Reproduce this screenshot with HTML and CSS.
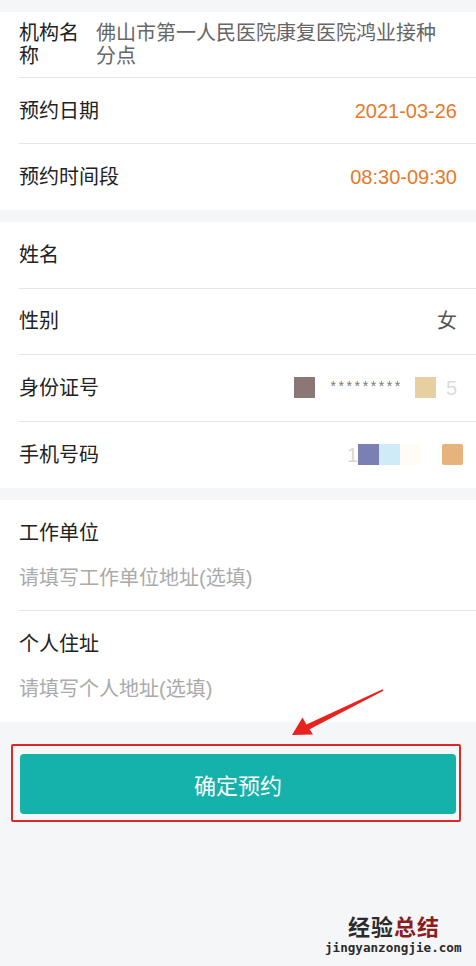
FILE: index.html
```html
<!DOCTYPE html>
<html lang="zh-CN">
<head>
<meta charset="utf-8">
<title>确定预约</title>
<link rel="stylesheet" href="styles.css">
</head>
<body>
<div class="page">
  <section class="card">
    <div class="row row-org">
      <div class="label label-org">机构名称</div>
      <div class="org">佛山市第一人民医院康复医院鸿业接种分点</div>
    </div>
    <div class="row">
      <div class="label">预约日期</div>
      <div class="value orange">2021-03-26</div>
    </div>
    <div class="row">
      <div class="label">预约时间段</div>
      <div class="value orange">08:30-09:30</div>
    </div>
  </section>

  <section class="card">
    <div class="row row-b">
      <div class="label">姓名</div>
      <div class="value faint">&nbsp;</div>
    </div>
    <div class="row row-b">
      <div class="label">性别</div>
      <div class="value gray">女</div>
    </div>
    <div class="row row-b">
      <div class="label">身份证号</div>
      <div class="mask">
        <span class="blk blk-brown"></span>
        <span class="stars">*********</span>
        <span class="blk blk-sand"></span>
        <span class="ghost">5</span>
      </div>
    </div>
    <div class="row row-b">
      <div class="label">手机号码</div>
      <div class="mask mask-phone">
        <span class="ghost">1</span>
        <span class="blk blk-blue"></span>
        <span class="blk blk-sky"></span>
        <span class="blk blk-cream"></span>
        <span class="blk blk-empty"></span>
        <span class="blk blk-peach"></span>
      </div>
    </div>
  </section>

  <section class="card">
    <div class="field">
      <div class="label">工作单位</div>
      <input class="input" type="text" placeholder="请填写工作单位地址(选填)">
    </div>
    <div class="field">
      <div class="label">个人住址</div>
      <input class="input" type="text" placeholder="请填写个人地址(选填)">
    </div>
  </section>

  <div class="btn-wrap">
    <button class="btn" type="button">确定预约</button>
    <div class="annot-box"></div>
  </div>

  <svg class="arrow" width="100" height="54" viewBox="288 686 100 54" xmlns="http://www.w3.org/2000/svg">
    <polygon fill="#e8231f" points="292,735 313,734.5 309.6,729.2 383.4,690.7 382.6,689.3 306.4,724.4 302.5,717.5"/>
  </svg>

  <div class="watermark">
    <div class="wm-cn"><span class="wm-dark">经验</span><span class="wm-red">总结</span></div>
    <div class="wm-en">jingyanzongjie.com</div>
  </div>
</div>
</body>
</html>
```

FILE: styles.css
```css
* {
  box-sizing: border-box;
}

html, body {
  margin: 0;
  padding: 0;
  background: #f4f6f7;
}

body {
  font-family: "Liberation Sans", "Noto Sans CJK SC", sans-serif;
  font-size: 20px;
  color: #222;
}

.page {
  position: relative;
  width: 476px;
  min-height: 966px;
  padding-top: 12px;
}

.card {
  background: #fff;
  margin-bottom: 12px;
}

.row {
  display: flex;
  align-items: center;
  justify-content: space-between;
  height: 66px;
  margin-left: 19px;
  padding-right: 19px;
  border-bottom: 1px solid #e6e6e6;
}

.row-b {
  height: 66.5px;
}

.row:last-child {
  border-bottom: none;
}

.label {
  color: #222;
  line-height: 24px;
  white-space: nowrap;
}

.row-org {
  justify-content: flex-start;
  gap: 15px;
}

.label-org {
  flex: 0 0 62px;
  white-space: normal;
  line-height: 23px;
}

.org {
  flex: 1;
  color: #666;
  line-height: 23px;
  padding-right: 14px;
}

.value {
  line-height: 24px;
}

.orange {
  color: #e8792b;
}

.gray {
  color: #555;
}

.faint {
  color: #f4f4f4;
}

.mask {
  display: flex;
  align-items: center;
}

.blk {
  display: inline-block;
  width: 21px;
  height: 21px;
}

.blk-brown {
  background: #8b7776;
  margin-right: 15px;
}

.stars {
  font-size: 14px;
  line-height: 14px;
  color: #7a7a7a;
  letter-spacing: 2.6px;
  margin-right: 12px;
  margin-top: -4px;
}

.blk-sand {
  background: #e6cfa0;
  margin-right: 10px;
}

.ghost {
  color: #dcdcdc;
  font-size: 20px;
  line-height: 24px;
}

.mask-phone .ghost {
  color: #d6d6d6;
}

.blk-blue {
  background: #7a7fb4;
}

.blk-sky {
  background: #cfeaf9;
}

.blk-cream {
  background: #fffcf3;
}

.blk-empty {
  background: #fff;
}

.blk-peach {
  background: #e6b37d;
  border-radius: 2px;
  margin-right: -6px;
}

.field {
  margin-left: 19px;
  padding: 21px 19px 20px 0;
  border-bottom: 1px solid #e6e6e6;
  display: flex;
  flex-direction: column;
  gap: 21px;
}

.field:last-child {
  border-bottom: none;
  padding-bottom: 21px;
}

.input {
  border: none;
  outline: none;
  padding: 0;
  margin: 0;
  width: 100%;
  height: 24px;
  font-family: inherit;
  font-size: 20px;
  line-height: 24px;
  color: #333;
  background: transparent;
}

.input::placeholder {
  color: #aaa;
}

.btn-wrap {
  position: relative;
  margin: 32px 20px 0 20px;
}

.btn {
  display: block;
  width: 100%;
  height: 60px;
  border: none;
  border-radius: 4px;
  background: #14b2ab;
  color: #fff;
  font-family: inherit;
  font-size: 22px;
  padding: 0;
}

.annot-box {
  position: absolute;
  top: -10px;
  left: -9px;
  right: -5px;
  bottom: -8px;
  border: 2.5px solid #dd2a27;
  border-radius: 2px;
  pointer-events: none;
}

.arrow {
  position: absolute;
  left: 288px;
  top: 686px;
}

.watermark {
  position: absolute;
  left: 322px;
  top: 915px;
  width: 140px;
}

.wm-cn {
  font-size: 22px;
  font-weight: bold;
  line-height: 26px;
  padding-left: 26px;
  letter-spacing: 1px;
}

.wm-dark {
  color: #2b2b2b;
}

.wm-red {
  color: #8c1c1e;
}

.wm-en {
  font-family: "DejaVu Sans Mono", monospace;
  font-size: 12.6px;
  font-weight: bold;
  color: #2b2b2b;
  line-height: 14px;
  padding-left: 3px;
}
```
